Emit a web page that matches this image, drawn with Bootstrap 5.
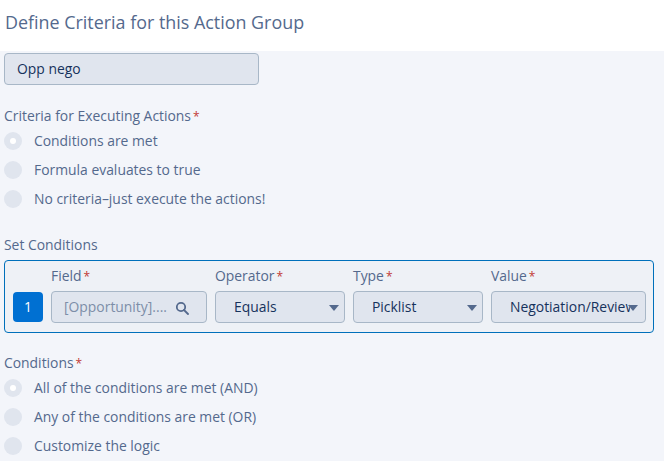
<!doctype html>
<html lang="en"><head><meta charset="utf-8"><title>Define Criteria</title>
<link href="https://cdn.jsdelivr.net/npm/bootstrap@5.3.0/dist/css/bootstrap.min.css" rel="stylesheet">
<style>
html,body{height:461px;overflow:hidden}
body{background:#f3f5fa;font-family:"Open Sans","Noto Sans",sans-serif;font-size:13.9px;color:#54698d;line-height:18px}
.hdr{height:51px;background:#fff;padding:11px 5px 0;font-size:17.9px;line-height:22px;color:#54698d}
.main{padding:2px 5px 0 4px}
.fakeinput{height:32px;background:#e0e5ee;border:1px solid #a8b7c7;border-radius:4px;color:#16325c;display:flex;align-items:center;white-space:nowrap;overflow:hidden;position:relative}
.name{width:255px;padding-left:12px}
.lbl{height:18px;line-height:18px}
.req{color:#c23934;margin-left:2px;font-size:12px}
.rad{height:18px;gap:12px;margin-bottom:11px}
.dot{width:18px;height:18px;border-radius:50%;background:#e0e5ee;flex:none;display:flex;align-items:center;justify-content:center}
.dot i{display:block;width:6px;height:6px;border-radius:50%;background:#fff}
.sec1{margin-top:22px}
.radios{margin-top:7px}
.setl{margin-top:28px;height:18px}
.box{margin-top:6px;width:650px;height:73px;background:#eef1f6;border:1px solid #0070bb;border-radius:4px;padding:6px 7px 0 8px;gap:8px}
.num{width:30px;height:30px;background:#0070d2;color:#fff;border-radius:4px;display:flex;align-items:center;justify-content:center;flex:none;margin-top:25px}
.cell .lbl{margin-bottom:6px;height:18px}
.c1{width:156px}.c2,.c3{width:130px}.c4{width:155px}
.pad{padding-left:18px}
.f1{padding-left:12px;color:#7d8ea8}
.mag{position:absolute;right:17px;top:9px}
.car{position:absolute;right:5px;top:13px;width:0;height:0;border-left:5px solid transparent;border-right:5px solid transparent;border-top:6px solid #54698d}
.car2{right:7px}
.cut{display:block;width:120px;overflow:hidden}
.cond{margin-top:21px}
</style></head><body>
<div class="hdr">Define Criteria for this Action Group</div>
<div class="main">
<div class="fakeinput name">Opp nego</div>
<div class="sec1 lbl">Criteria for Executing Actions<span class="req">*</span></div>
<div class="radios">
<div class="d-flex align-items-center rad"><span class="dot"><i></i></span>Conditions are met</div>
<div class="d-flex align-items-center rad"><span class="dot"></span>Formula evaluates to true</div>
<div class="d-flex align-items-center rad"><span class="dot"></span>No criteria–just execute the actions!</div>
</div>
<div class="setl lbl">Set Conditions</div>
<div class="box d-flex">
<div class="num">1</div>
<div class="cell c1"><div class="lbl">Field<span class="req">*</span></div><div class="fakeinput f1">[Opportunity]....<svg class="mag" width="14" height="14" viewBox="0 0 14 14" fill="none" stroke="#54698d" stroke-width="1.8"><circle cx="6" cy="6" r="4.2"/><path d="M9 9l4 4" stroke-linecap="round"/></svg></div></div>
<div class="cell c2"><div class="lbl">Operator<span class="req">*</span></div><div class="fakeinput pad">Equals<span class="car"></span></div></div>
<div class="cell c3"><div class="lbl">Type<span class="req">*</span></div><div class="fakeinput pad">Picklist<span class="car car3"></span></div></div>
<div class="cell c4"><div class="lbl">Value<span class="req">*</span></div><div class="fakeinput pad"><span class="cut">Negotiation/Review</span><span class="car car2"></span></div></div>
</div>
<div class="cond lbl">Conditions<span class="req">*</span></div>
<div class="radios">
<div class="d-flex align-items-center rad"><span class="dot"><i></i></span>All of the conditions are met (AND)</div>
<div class="d-flex align-items-center rad"><span class="dot"></span>Any of the conditions are met (OR)</div>
<div class="d-flex align-items-center rad"><span class="dot"></span>Customize the logic</div>
</div>
</div>
<script src="https://cdn.jsdelivr.net/npm/bootstrap@5.3.0/dist/js/bootstrap.bundle.min.js"></script>
</body></html>
